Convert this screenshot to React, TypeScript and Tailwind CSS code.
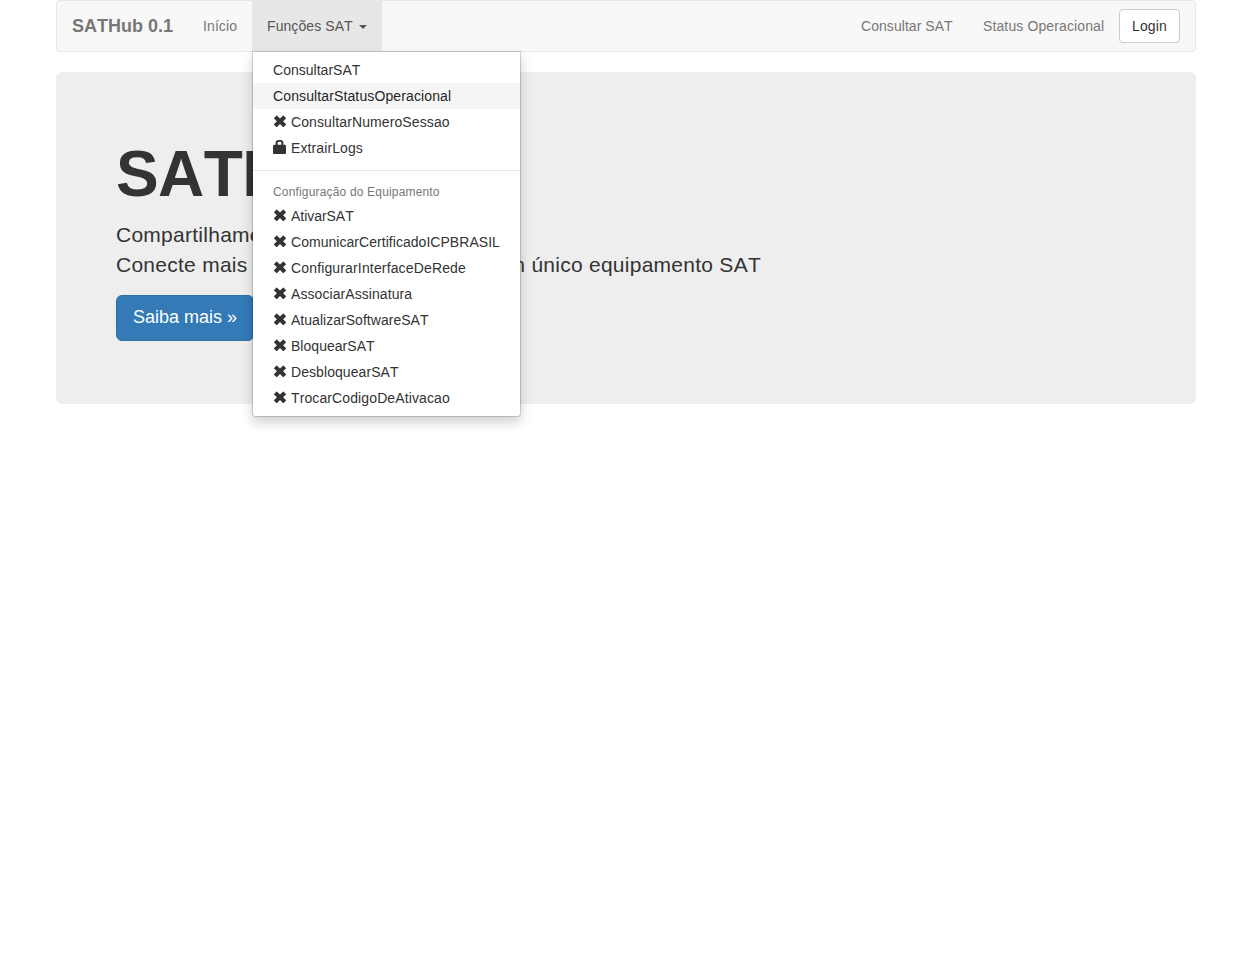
import React from 'react';

const Remove = () => (
  <svg viewBox="0 -0.8 14 14" className="mr-1 inline-block h-3.5 w-3.5 align-[-1px]" fill="currentColor">
    <path d="M3.300.900Q3.700.500 4.100.900L7 3.700 9.900.900Q10.300.500 10.700.900L12.900 3.100Q13.200 3.500 12.900 3.800L10.100 6.500 12.900 9.200Q13.200 9.600 12.900 9.900L10.700 12.100Q10.300 12.500 9.900 12.100L7 9.300 4.100 12.100Q3.700 12.500 3.300 12.100L1.100 9.900Q.800 9.600 1.100 9.200L3.900 6.500 1.100 3.800Q.800 3.500 1.100 3.100z" />
  </svg>
);

const Lock = () => (
  <svg viewBox="0 0 14 14" className="mr-1 inline-block h-3.5 w-3.5 align-[-1px]" fill="currentColor">
    <path fillRule="evenodd" d="M2.600 4.800V3Q2.600 0 5.500 0h2Q10.400 0 10.400 3v1.800h1.300q1.300.2 1.300 1.300v6.900q0 1-.9 1H.9Q0 14 0 13V6.100Q0 5 1.300 4.800zM4.600 4.800h3.800V3.200Q8.400 1.700 7.300 1.700H5.700Q4.600 1.700 4.600 3.200z" />
  </svg>
);

type Entry = { label: string; icon?: 'remove' | 'lock'; hover?: boolean; tracking?: string };

const queries: Entry[] = [
  { label: 'ConsultarSAT', tracking: 'tracking-[0.02px]' },
  { label: 'ConsultarStatusOperacional', hover: true, tracking: 'tracking-[0.12px]' },
  { label: 'ConsultarNumeroSessao', icon: 'remove', tracking: 'tracking-[0.11px]' },
  { label: 'ExtrairLogs', icon: 'lock', tracking: 'tracking-[0.1px]' },
];

const settings: Entry[] = [
  { label: 'AtivarSAT', icon: 'remove', tracking: 'tracking-[-0.04px]' },
  { label: 'ComunicarCertificadoICPBRASIL', icon: 'remove', tracking: 'tracking-[0.04px]' },
  { label: 'ConfigurarInterfaceDeRede', icon: 'remove', tracking: 'tracking-[0.15px]' },
  { label: 'AssociarAssinatura', icon: 'remove', tracking: 'tracking-[0.07px]' },
  { label: 'AtualizarSoftwareSAT', icon: 'remove', tracking: 'tracking-[0.03px]' },
  { label: 'BloquearSAT', icon: 'remove', tracking: 'tracking-[0.03px]' },
  { label: 'DesbloquearSAT', icon: 'remove', tracking: 'tracking-[0.07px]' },
  { label: 'TrocarCodigoDeAtivacao', icon: 'remove', tracking: 'tracking-[0.11px]' },
];

const Item = ({ label, icon, hover, tracking }: Entry) => (
  <li>
    <a href="#" className={`block h-[26px] px-5 py-[3px] leading-5 whitespace-nowrap ${tracking} ${hover ? 'bg-[#f5f5f5] text-[#262626]' : 'text-[#333]'}`}>
      {icon === 'remove' && <Remove />}
      {icon === 'lock' && <Lock />}
      {label}
    </a>
  </li>
);

export default function App() {
  return (
    <div className="min-h-screen bg-white font-['Liberation_Sans',Arial,sans-serif] text-sm leading-5 text-[#333] [font-kerning:none]">
      <div className="ml-14 w-[1140px]">
        <nav className="mb-5 flex h-[52px] justify-between rounded border border-[#e7e7e7] bg-[#f8f8f8] text-[#777]">
          <div className="flex">
            <a href="#" className="w-[131px] p-[15px] text-lg leading-5 font-bold whitespace-nowrap">SATHub 0.1</a>
            <a href="#" className="w-16 p-[15px] tracking-[0.1px]">Início</a>
            <div className="relative">
              <a href="#" className="flex h-[50px] w-[130px] items-center justify-between bg-[#e7e7e7] px-[15px] tracking-[0.08px] text-[#555]">
                Funções SAT
                <span className="mt-0.5 border-x-4 border-t-4 border-x-transparent border-t-[#555]" />
              </a>
              <ul className="absolute top-[50px] left-0 z-10 w-[269px] rounded-b border border-black/15 bg-white bg-clip-padding py-[5px] shadow-[0_6px_12px_rgba(0,0,0,0.175)]">
                {queries.map((e) => <Item key={e.label} {...e} />)}
                <li className="my-[9px] h-px bg-[#e5e5e5]" />
                <li className="px-5 pt-1 pb-0.5 text-xs leading-[17px] tracking-[0.17px] text-[#777]">Configuração do Equipamento</li>
                {settings.map((e) => <Item key={e.label} {...e} />)}
              </ul>
            </div>
          </div>
          <div className="flex pr-[15px]">
            <a href="#" className="w-[122px] p-[15px] tracking-[0.05px] whitespace-nowrap">Consultar SAT</a>
            <a href="#" className="w-[151px] p-[15px] tracking-[0.12px] whitespace-nowrap">Status Operacional</a>
            <button className="mt-2 h-[34px] w-[61px] rounded border border-[#ccc] bg-white tracking-[0.15px] text-[#333]">Login</button>
          </div>
        </nav>
        <main className="h-[332px] rounded-md bg-[#eee] px-[60px] pt-[68px]">
          <h1 className="text-[64px] leading-[69px] font-bold tracking-[-0.6px]">SATHub</h1>
          <p className="mt-[11px] mb-[15px] text-[21px] leading-[30px] tracking-[0.26px] whitespace-nowrap">
            <span className="block">Compartilhamento de SAT</span>
            <span className="flex w-[645px] justify-between">
              <span>Conecte mais</span>
              <span>de um computador com um único equipamento SAT</span>
            </span>
          </p>
          <a href="#" className="inline-block h-[46px] w-[138px] rounded-md border border-[#2e6da4] bg-[#337ab7] px-4 py-[9px] text-lg leading-6 whitespace-nowrap text-white">Saiba mais »</a>
        </main>
      </div>
    </div>
  );
}
